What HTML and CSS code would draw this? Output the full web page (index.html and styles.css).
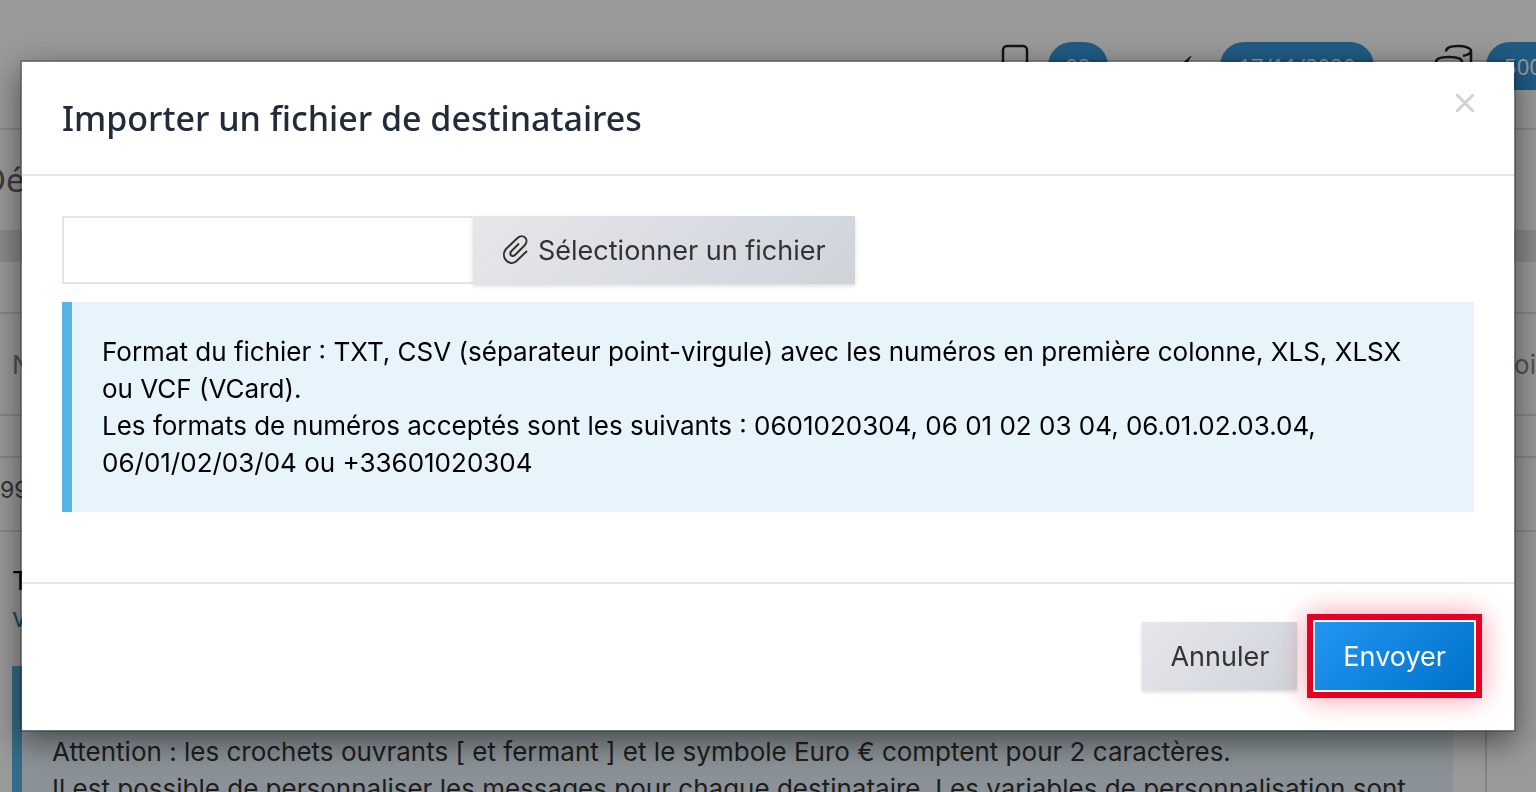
FILE: index.html
```html
<!DOCTYPE html>
<html lang="fr">
<head>
<meta charset="utf-8">
<title>Importer un fichier de destinataires</title>
<link rel="stylesheet" href="styles.css">
</head>
<body>
<div class="page">
  <header class="topbar">
    <svg class="icon-phone" viewBox="0 0 30 48" aria-hidden="true"><rect x="3" y="4" width="24" height="40" rx="4"/></svg>
    <span class="pill pill-count">92</span>
    <svg class="icon-bolt" viewBox="0 0 30 48" aria-hidden="true"><path d="M24 14 4 32h10L9 46l18-22H18z"/></svg>
    <span class="pill pill-date">17/11/2020</span>
    <svg class="icon-coins" viewBox="0 0 44 48" aria-hidden="true"><path d="M14 9.500C14 6 19 4 26 4s13 2 13 5-4 4-8 5M39 9v10c0 3-3 5-8 5M4 20c0-4 6-5 13-5s13 1 13 5-6 5-13 5-13-1-13-5zM4 20v18c0 3 6 6 13 6s13-3 13-6V20"/></svg>
    <span class="pill pill-credit">500</span>
  </header>
  <h1 class="page-title">Dé</h1>
  <div class="band"></div>
  <div class="spacer"></div>
  <div class="row head"><span>N</span><span>voi</span></div>
  <div class="spacer small"></div>
  <div class="row entry"><span>99</span></div>
  <main class="message">
    <p class="label">T</p>
    <a class="link" href="#">v</a>
    <div class="note">
      <p>Attention : les crochets ouvrants [ et fermant ] et le symbole Euro € comptent pour 2 caractères.</p>
      <p>Il est possible de personnaliser les messages pour chaque destinataire. Les variables de personnalisation sont</p>
    </div>
  </main>
</div>
<div class="overlay">
  <form class="modal" role="dialog" aria-modal="true" aria-labelledby="modal-title">
    <div class="modal-header">
      <h2 id="modal-title">Importer un fichier de destinataires</h2>
      <button class="close" type="button" aria-label="Fermer"><svg viewBox="0 0 18 18" aria-hidden="true"><path d="M0 0 18 18M18 0 0 18"/></svg></button>
    </div>
    <div class="modal-body">
      <div class="picker">
        <input type="text" aria-label="Fichier">
        <button class="btn btn-file" type="button"><svg viewBox="0 0 26 30" aria-hidden="true"><path d="M17 8.500 9.500 16C6.500 19 10 23 13 20L22.500 10.500C28 4.500 21-2 15.500 3L4 14C-2 21 6 32 14 26.500L25 16"/></svg>Sélectionner un fichier</button>
      </div>
      <div class="info">
        <p>Format du fichier : TXT, CSV (séparateur point-virgule) avec les numéros en première colonne, XLS, XLSX ou VCF (VCard).</p>
        <p>Les formats de numéros acceptés sont les suivants : 0601020304, 06 01 02 03 04, 06.01.02.03.04, 06/01/02/03/04 ou +33601020304</p>
      </div>
    </div>
    <div class="modal-footer">
      <button class="btn" type="button">Annuler</button>
      <button class="btn btn-primary" type="submit">Envoyer</button>
    </div>
  </form>
</div>
</body>
</html>
```
FILE: styles.css
```css
* { box-sizing: border-box; }
body { margin: 0; font-family: Inter, "Noto Sans", sans-serif; font-size: 26px; line-height: 37px; color: #000; background: #fff; }
p, h1, h2 { margin: 0; }
.page { height: 100vh; overflow: hidden; }
.topbar { display: flex; justify-content: flex-end; align-items: flex-start; height: 130px; padding-top: 42px; border-bottom: 2px solid #e4e4e4; }
.topbar svg { flex: none; height: 48px; fill: none; stroke: #222; stroke-width: 2.5; }
.icon-phone { width: 30px; margin-right: 18px; }
.topbar .icon-bolt { width: 30px; margin: 0 23px 0 59px; fill: #222; stroke-width: 1; }
.topbar .icon-coins { width: 44px; margin: 0 10px 0 58px; }
.pill { flex: none; height: 48px; border-radius: 24px; background: #3598dc; color: #fff; text-align: center; font: 22px/48px "Noto Sans", sans-serif; }
.pill-count { width: 60px; }
.pill-date { width: 154px; }
.pill-credit { width: 74px; margin-right: -24px; }
.page-title { height: 100px; margin-left: -18px; font: 33px/100px "Noto Sans", sans-serif; color: #666; }
.band { height: 32px; background: #e6e6e6; }
.spacer { height: 50px; }
.spacer.small { height: 40px; }
.row { display: flex; justify-content: space-between; align-items: center; border-top: 2px solid #e0e0e0; border-bottom: 2px solid #e0e0e0; }
.head { height: 104px; padding-left: 12px; color: #888; }
.entry { height: 76px; color: #555; font-size: 23px; padding-bottom: 8px; }
.message { width: calc(100% - 49px); height: 270px; padding: 30px 32px 0 12px; border-right: 2px solid #d4dce0; }
.link { display: block; color: #2d7dab; text-decoration: none; }
.note { margin-top: 30px; padding: 67px 0 0 30px; height: 170px; border-left: 10px solid #57b5e3; background: #e7f4fc; color: #333; }
.overlay { position: fixed; inset: 0; padding: 60px 20px; background: rgba(0, 0, 0, .4); }
.modal { border: 2px solid rgba(0, 0, 0, .2); background: #fff; background-clip: padding-box; box-shadow: 0 10px 30px rgba(0, 0, 0, .5); }
.modal-header { display: flex; justify-content: space-between; align-items: flex-start; padding: 32px 40px; border-bottom: 2px solid #e5e5e5; }
.modal-header h2 { font: 500 34px/48px "Noto Sans", sans-serif; color: #222b3a; }
.close { display: flex; padding: 0; border: 0; background: none; }
.close svg { width: 18px; height: 18px; fill: none; stroke: #d2d2d2; stroke-width: 3; }
.modal-body { padding: 40px 40px 70px; }
.picker { display: flex; margin-bottom: 18px; }
.picker input { width: 411px; height: 68px; padding: 0 16px; border: 2px solid #e5e5e5; border-right: 0; background: #fff; font: inherit; }
.btn { display: flex; justify-content: center; align-items: center; height: 68px; padding: 2px 28px 0; border: 0; background: linear-gradient(135deg, #e6e7ea, #d3d7df 80%, #cfd3d8); box-shadow: 0 2px 4px rgba(0, 0, 0, .15); color: #333; font: 27px/36px Inter, "Noto Sans", sans-serif; white-space: nowrap; }
.btn-file { padding: 2px 29px 0; }
.btn-file svg { width: 26px; height: 30px; margin: 0 10px 2px 0; fill: none; stroke: #333; stroke-width: 2; }
.info { padding: 31px 60px 31px 30px; border-left: 10px solid #57b5e3; background: #e7f4fc; }
.modal-footer { display: flex; justify-content: flex-end; gap: 18px; padding: 38px 40px 40px; border-top: 2px solid #e5e5e5; }
.btn-primary { background: linear-gradient(135deg, #2196f3, #0072c9); color: #fff; box-shadow: 0 0 0 2px #fff, 0 0 0 8px #e60023, 0 0 28px 8px rgba(230, 0, 35, .4); }
```
